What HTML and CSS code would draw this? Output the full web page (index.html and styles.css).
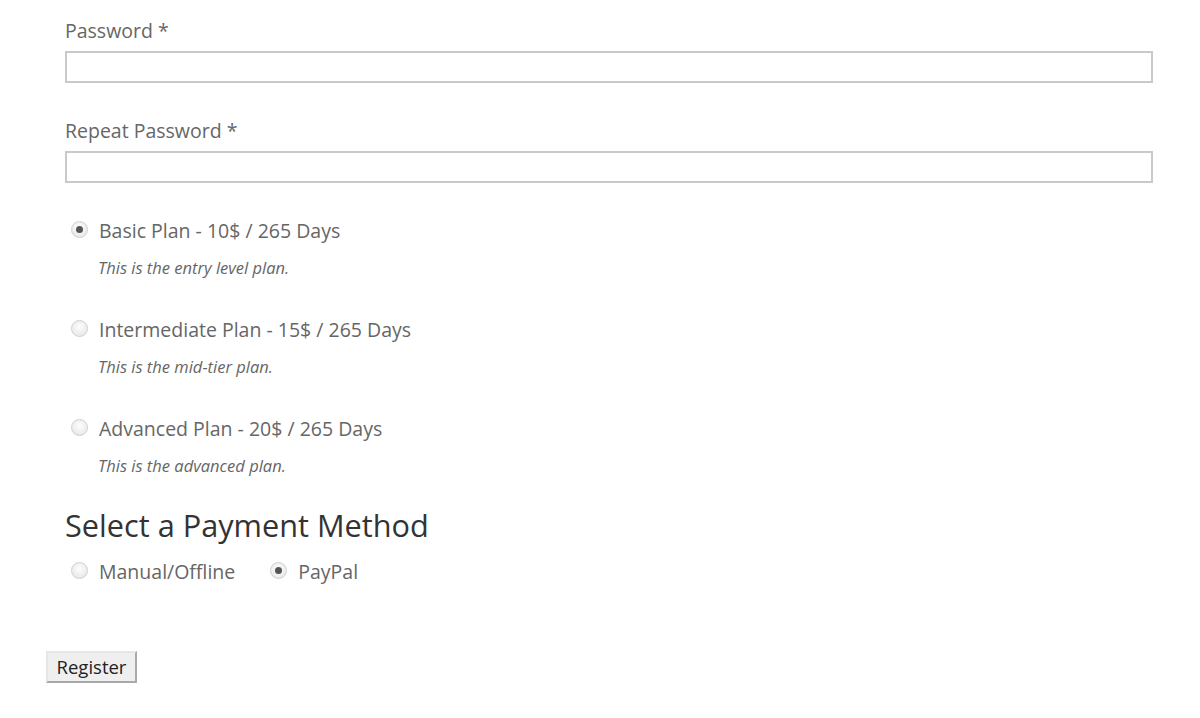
FILE: index.html
```html
<!DOCTYPE html>
<html>
<head>
<meta charset="utf-8">
<link rel="stylesheet" href="styles.css">
</head>
<body>
<form class="form">
  <div class="field">
    <label class="label">Password *</label>
    <input class="input" type="password">
  </div>
  <div class="field">
    <label class="label">Repeat Password *</label>
    <input class="input" type="password">
  </div>

  <div class="plans">
    <div class="plan">
      <label class="option"><span class="radio checked"></span><span class="option-text">Basic Plan - 10$ / 265 Days</span></label>
      <p class="desc">This is the entry level plan.</p>
    </div>
    <div class="plan">
      <label class="option"><span class="radio"></span><span class="option-text">Intermediate Plan - 15$ / 265 Days</span></label>
      <p class="desc">This is the mid-tier plan.</p>
    </div>
    <div class="plan">
      <label class="option"><span class="radio"></span><span class="option-text">Advanced Plan - 20$ / 265 Days</span></label>
      <p class="desc">This is the advanced plan.</p>
    </div>
  </div>

  <h2 class="heading">Select a Payment Method</h2>
  <div class="methods">
    <label class="option"><span class="radio"></span><span class="option-text">Manual/Offline</span></label>
    <label class="option"><span class="radio checked"></span><span class="option-text">PayPal</span></label>
  </div>

  <div class="actions">
    <button class="button" type="button">Register</button>
  </div>
</form>
</body>
</html>
```

FILE: styles.css
```css
html, body {
  margin: 0;
  padding: 0;
  background: #fff;
}

body {
  font-family: "Open Sans", "Liberation Sans", sans-serif;
  color: #666;
}

.form {
  padding: 18px 47px 0 65px;
  width: 1088px;
}

.field {
  display: flex;
  flex-direction: column;
  margin-bottom: 35px;
}

.label {
  font-size: 19.5px;
  line-height: 26px;
  color: #666;
  margin-bottom: 7px;
}

.input {
  box-sizing: border-box;
  width: 1088px;
  height: 32px;
  margin: 0;
  border: 2px solid #c9c9c9;
  background: #fff;
  outline: none;
}

.plans {
  display: flex;
  flex-direction: column;
}

.plan {
  display: flex;
  flex-direction: column;
  height: 99px;
}

.option {
  display: flex;
  align-items: center;
  height: 26px;
}

.radio {
  box-sizing: border-box;
  width: 17px;
  height: 17px;
  border-radius: 50%;
  border: 1px solid #cfcfcf;
  background: radial-gradient(circle at 50% 40%, #fdfdfd 0%, #ebebeb 70%, #dcdcdc 100%);
  margin-left: 6px;
  margin-right: 11px;
  margin-top: -3px;
  display: flex;
  align-items: center;
  justify-content: center;
  flex: none;
}

.radio.checked::after {
  content: "";
  width: 7px;
  height: 7px;
  border-radius: 50%;
  background: #555;
}

.option-text {
  font-size: 19.5px;
  line-height: 26px;
  color: #666;
}

.desc {
  margin: 13px 0 0 33px;
  font-size: 16.5px;
  line-height: 22px;
  font-style: italic;
  color: #666;
}

.heading {
  margin: -11px 0 0 0;
  font-size: 30.7px;
  line-height: 42px;
  font-weight: 400;
  color: #333;
}

.methods {
  display: flex;
  gap: 29px;
  margin-top: 13px;
}

.actions {
  margin: 66px 0 0 -19px;
}

.button {
  box-sizing: border-box;
  display: block;
  width: 91px;
  height: 32px;
  padding: 0;
  font-family: "Open Sans", "Liberation Sans", sans-serif;
  font-size: 18.5px;
  line-height: 28px;
  color: #222;
  background: #efefef;
  border: 2px solid;
  border-color: #e6e6e6 #a9a9a9 #a9a9a9 #e6e6e6;
  border-radius: 0;
}
```
